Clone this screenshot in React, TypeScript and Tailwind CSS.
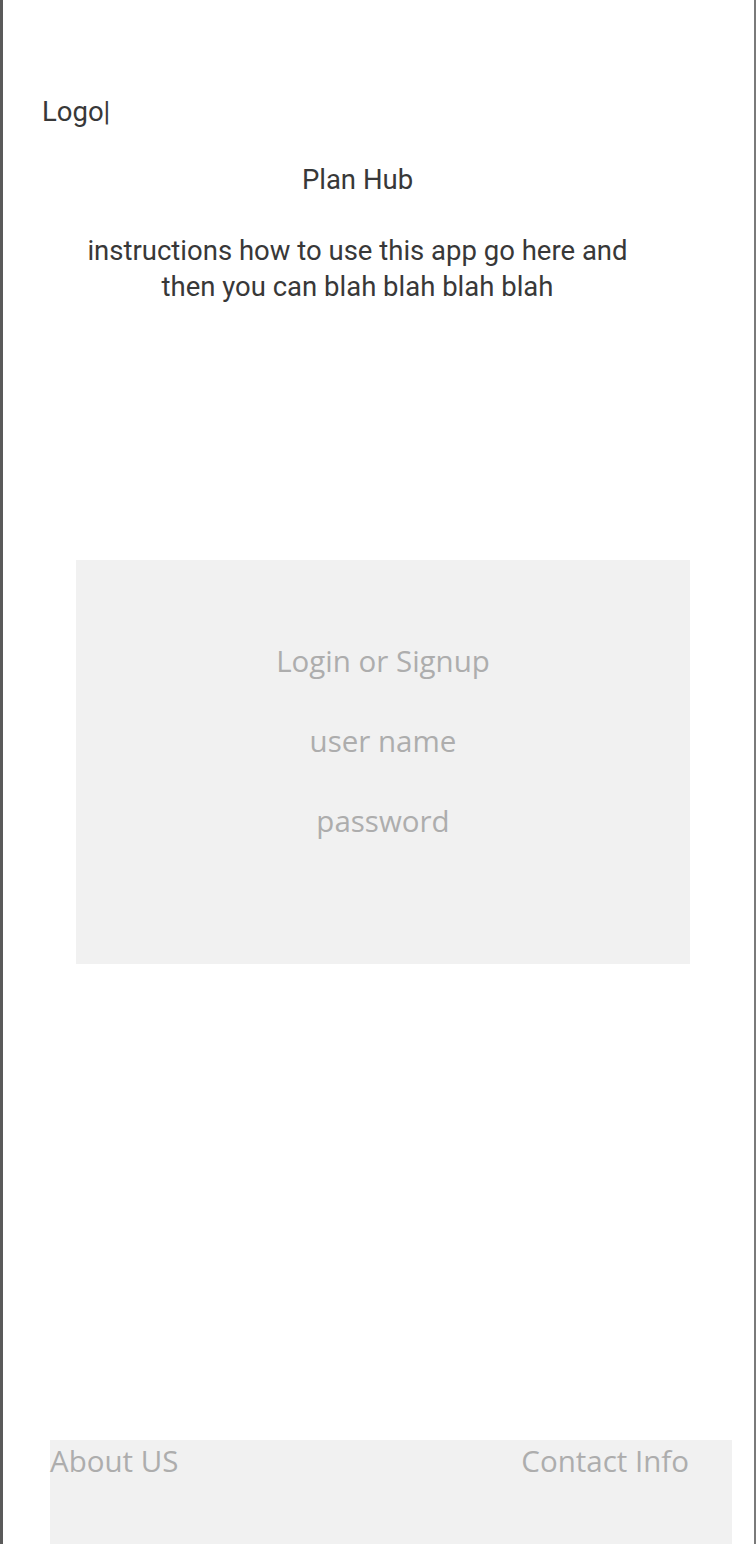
export default function App() {
  return (
    <div className="w-[756px] h-[1544px] overflow-hidden bg-white border-l-[3px] border-l-[#5a5a5a] border-r-2 border-r-[#7a7a7a] flex flex-col">
      {/* Header */}
      <header className="pl-[39px] w-[670px] pt-[95px] font-['Roboto',sans-serif] text-[#383838]">
        <div className="text-[27.5px] leading-[34px]">Logo|</div>
        <h1 className="mt-[34px] text-center text-[27.5px] leading-[34px] font-normal">Plan Hub</h1>
        <p className="mt-[36px] text-center text-[27.5px] leading-[36px]">
          instructions how to use this app go here and
          <br />
          then you can blah blah blah blah
        </p>
      </header>

      {/* Login box */}
      <section className="ml-[73px] mt-[255px] w-[614px] h-[404px] bg-[#f1f1f1] flex flex-col items-center pt-[81px] gap-[40px] font-['Open_Sans',sans-serif] text-[29.5px] leading-[40px] text-[#adadad]">
        <div>Login or Signup</div>
        <div>user name</div>
        <div>password</div>
      </section>

      {/* Footer */}
      <footer className="mt-auto ml-[47px] w-[682px] h-[104px] bg-[#f1f1f1] flex justify-between pr-[43px] font-['Open_Sans',sans-serif] text-[29.5px] leading-[42px] text-[#adadad]">
        <span>About US</span>
        <span>Contact Info</span>
      </footer>
    </div>
  );
}
